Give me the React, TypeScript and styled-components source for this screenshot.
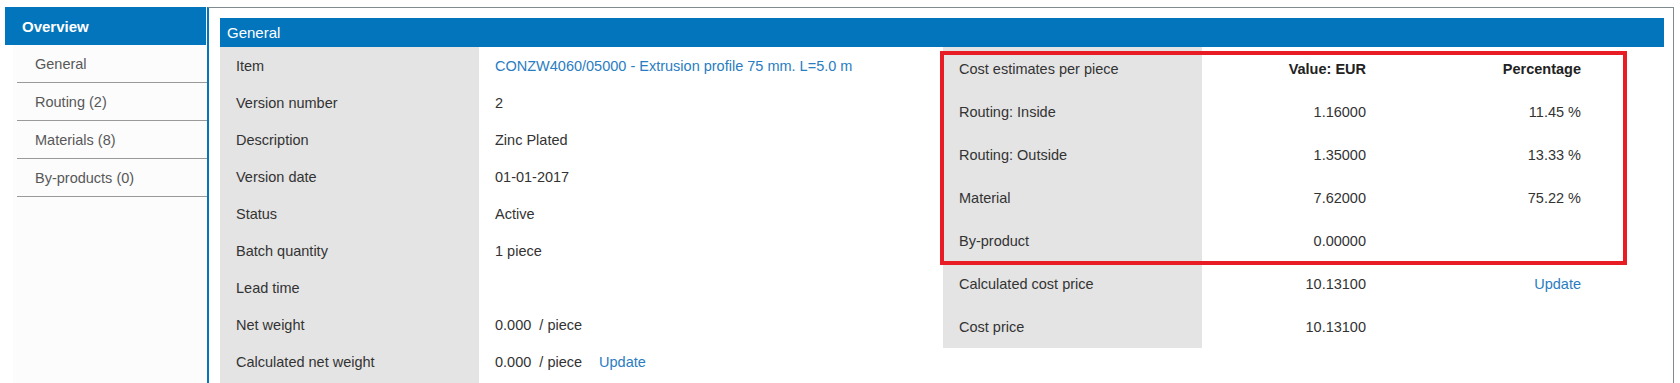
import styled, { createGlobalStyle } from "styled-components";

const GlobalStyle = createGlobalStyle`
  html, body {
    margin: 0;
    padding: 0;
    height: 100%;
    overflow: hidden;
    background: #ffffff;
  }
  body {
    font-family: "Liberation Sans", Arial, sans-serif;
    font-size: 14.5px;
    color: #333333;
  }
`;

const sideItems = ["General", "Routing (2)", "Materials (8)", "By-products (0)"];

const generalRows: { label: string; value?: string; link?: boolean; update?: boolean }[] = [
  { label: "Item", value: "CONZW4060/05000 - Extrusion profile 75 mm. L=5.0 m", link: true },
  { label: "Version number", value: "2" },
  { label: "Description", value: "Zinc Plated" },
  { label: "Version date", value: "01-01-2017" },
  { label: "Status", value: "Active" },
  { label: "Batch quantity", value: "1 piece" },
  { label: "Lead time" },
  { label: "Net weight", value: "0.000\u00a0\u00a0/ piece" },
  { label: "Calculated net weight", value: "0.000\u00a0\u00a0/ piece", update: true },
];

const costRows: { label: string; value: string; pct?: string; update?: boolean }[] = [
  { label: "Routing: Inside", value: "1.16000", pct: "11.45 %" },
  { label: "Routing: Outside", value: "1.35000", pct: "13.33 %" },
  { label: "Material", value: "7.62000", pct: "75.22 %" },
  { label: "By-product", value: "0.00000" },
  { label: "Calculated cost price", value: "10.13100", update: true },
  { label: "Cost price", value: "10.13100" },
];

export default function App() {
  return (
    <>
      <GlobalStyle />
      <Page>
        <Sidebar>
          <SideHeader>Overview</SideHeader>
          <SideList>
            {sideItems.map((item) => (
              <SideItem key={item}>{item}</SideItem>
            ))}
          </SideList>
        </Sidebar>
        <Panel>
          <SectionHeader>General</SectionHeader>
          <Columns>
            <InfoTable>
              {generalRows.map((row) => (
                <Row key={row.label}>
                  <LabelCell>{row.label}</LabelCell>
                  <ValueCell>
                    {row.link ? <Link>{row.value}</Link> : row.value}
                    {row.update && <UpdateLink>Update</UpdateLink>}
                  </ValueCell>
                </Row>
              ))}
            </InfoTable>
            <CostArea>
              <CostTable>
                <CostRow>
                  <LabelCell>Cost estimates per piece</LabelCell>
                  <NumCell $bold>Value: EUR</NumCell>
                  <NumCell $bold>Percentage</NumCell>
                </CostRow>
                {costRows.map((row) => (
                  <CostRow key={row.label}>
                    <LabelCell>{row.label}</LabelCell>
                    <NumCell>{row.value}</NumCell>
                    <NumCell>{row.update ? <Link>Update</Link> : row.pct}</NumCell>
                  </CostRow>
                ))}
              </CostTable>
              <Highlight />
            </CostArea>
          </Columns>
        </Panel>
      </Page>
    </>
  );
}

const Page = styled.div`
  display: flex;
  align-items: stretch;
  padding: 7px 0 0 5px;
  height: 100vh;
  overflow: hidden;
  box-sizing: border-box;
`;

const Sidebar = styled.nav`
  width: 201px;
  flex-shrink: 0;
  display: flex;
  flex-direction: column;
  margin-right: 1px;
`;

const SideHeader = styled.div`
  height: 38px;
  flex-shrink: 0;
  display: flex;
  align-items: center;
  padding-left: 17px;
  background: #0275bc;
  color: #ffffff;
  font-weight: bold;
  font-size: 15px;
`;

const SideList = styled.div`
  flex: 1;
  margin-left: 8px;
  padding-left: 4px;
  background: #fcfcfc;
`;

const SideItem = styled.div`
  height: 37px;
  display: flex;
  align-items: center;
  padding-left: 18px;
  border-bottom: 1px solid #9a9a9a;
  color: #585858;
  margin-right: -1px;
`;

const Panel = styled.main`
  flex: 1;
  display: flex;
  flex-direction: column;
  margin-right: 6px;
  border-left: 2px solid #0275bc;
  border-top: 1px solid #7f8b8f;
  border-right: 1px solid #7f8b8f;
  padding: 10px 9px 0 11px;
  min-width: 0;
`;

const SectionHeader = styled.div`
  height: 29px;
  flex-shrink: 0;
  display: flex;
  align-items: center;
  padding-left: 7px;
  background: #0275bc;
  color: #ffffff;
  font-size: 15px;
`;

const Columns = styled.div`
  flex: 1;
  display: grid;
  grid-template-columns: 723px 1fr;
  align-items: start;
  min-height: 0;
`;

const InfoTable = styled.div`
  display: flex;
  flex-direction: column;
  align-self: stretch;

  &::after {
    content: "";
    flex: 1;
    width: 259px;
    background: #e4e4e4;
  }
`;

const Row = styled.div`
  display: grid;
  grid-template-columns: 259px 1fr;
  height: 37px;
  flex-shrink: 0;
`;

const LabelCell = styled.div`
  display: flex;
  align-items: center;
  padding-left: 16px;
  background: #e4e4e4;
  color: #333333;
  white-space: nowrap;
`;

const ValueCell = styled.div`
  display: flex;
  align-items: center;
  padding-left: 16px;
  color: #333333;
  white-space: nowrap;
`;

const Link = styled.span`
  color: #2a7dc1;
`;

const UpdateLink = styled(Link)`
  margin-left: 17px;
`;

const CostArea = styled.div`
  position: relative;
`;

const CostTable = styled.div`
  display: flex;
  flex-direction: column;
`;

const CostRow = styled.div`
  display: grid;
  grid-template-columns: 259px 180px 215px;
  height: 43px;
`;

const NumCell = styled.div<{ $bold?: boolean }>`
  display: flex;
  align-items: center;
  justify-content: flex-end;
  padding-right: 16px;
  font-weight: ${({ $bold }) => ($bold ? "bold" : "normal")};
  color: ${({ $bold }) => ($bold ? "#222222" : "#333333")};
  white-space: nowrap;
`;

const Highlight = styled.div`
  position: absolute;
  left: -3px;
  top: 4px;
  width: 687px;
  height: 214px;
  box-sizing: border-box;
  border: 4px solid #e81c24;
  pointer-events: none;
`;
